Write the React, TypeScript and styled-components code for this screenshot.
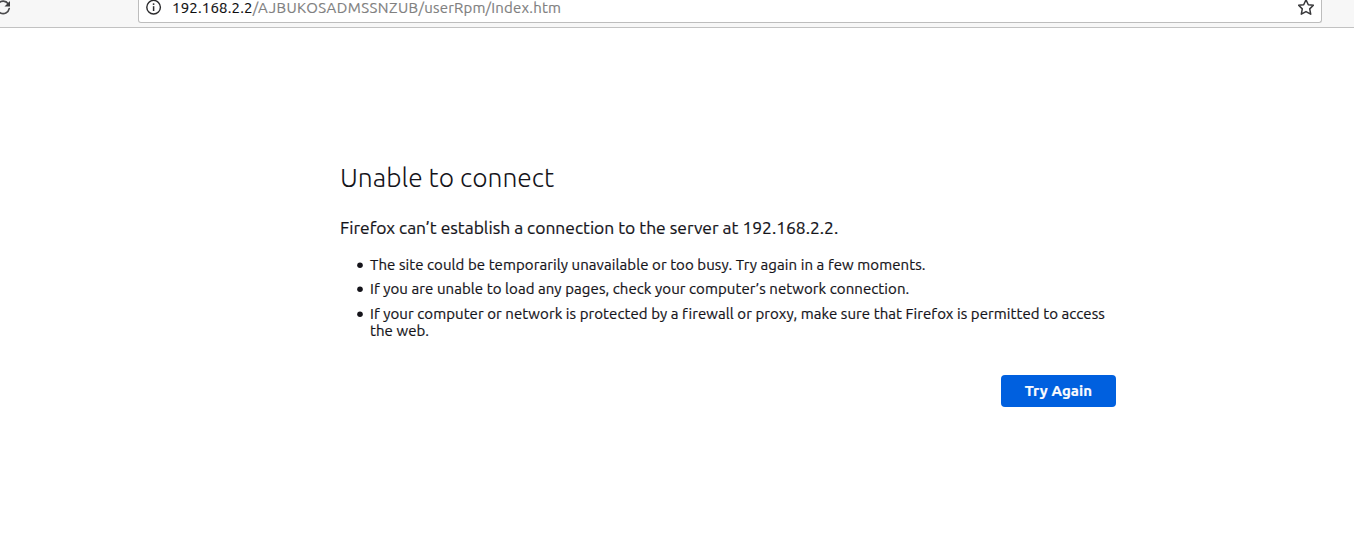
import React from 'react';
import styled, { createGlobalStyle } from 'styled-components';

const GlobalStyle = createGlobalStyle`
  * { box-sizing: border-box; }
  body {
    margin: 0;
    background: #fff;
    color: #15141a;
    font-family: Ubuntu, "Noto Sans", "Open Sans", sans-serif;
    overflow: hidden;
  }
`;

const Page = styled.div`
  height: 538px;
  display: flex;
  flex-direction: column;
  overflow: hidden;
`;

const Toolbar = styled.header`
  flex: none;
  height: 28px;
  display: flex;
  align-items: flex-start;
  background: #f7f7f7;
  border-bottom: 1px solid #c2c2c2;
`;

const ReloadIcon = styled.svg`
  flex: none;
  width: 16px;
  height: 16px;
  margin-left: -5px;
`;

const AddressBar = styled.div`
  width: 1184px;
  height: 23px;
  margin-left: 127px;
  padding: 0 7px;
  display: flex;
  align-items: flex-start;
  background: #fff;
  border: 1px solid #bdbdbd;
  border-top: 0;
  border-radius: 0 0 3px 3px;
`;

const BarIcon = styled.svg`
  flex: none;
  width: 16px;
  height: 16px;
`;

const Address = styled.div`
  flex: 1;
  margin-left: 10px;
  font-size: 15px;
  line-height: 16px;
  letter-spacing: 0.18px;
  white-space: nowrap;
  color: #808080;
  -webkit-text-stroke: 0.15px;
`;

const Host = styled.span`
  color: #0c0c0d;
`;

const Session = styled.span`
  letter-spacing: 0.43px;
`;

const Main = styled.main`
  width: 776px;
  margin: 131px 0 0 340px;
  display: flex;
  flex-direction: column;
`;

const Title = styled.h1`
  margin: 0;
  font-size: 26.4px;
  line-height: 36px;
  font-weight: 300;
  white-space: nowrap;
`;

const Lead = styled.p`
  margin: 21px 0 0;
  font-size: 17.44px;
  line-height: 24px;
  white-space: nowrap;
  -webkit-text-stroke: 0.2px;
`;

const Hints = styled.ul`
  margin: 16px 0 0;
  padding: 0 0 0 30px;
  list-style: none;
`;

const Hint = styled.li`
  position: relative;
  margin-bottom: 8px;
  font-size: 15px;
  line-height: 17px;
  white-space: nowrap;
  letter-spacing: 0.078px;
  -webkit-text-stroke: 0.2px;

  &:first-child {
    margin-bottom: 7px;
  }

  &::before {
    content: '';
    position: absolute;
    left: -13px;
    top: 6px;
    width: 6px;
    height: 6px;
    border-radius: 50%;
    background: #15141a;
    transform: translateY(0.3px) scale(0.93);
  }
`;

const RetryButton = styled.button`
  align-self: flex-end;
  width: 115px;
  height: 32px;
  margin-top: 27.5px;
  padding: 0;
  border: 0;
  border-radius: 4px;
  background: #0060df;
  color: #fbfbfe;
  font: 600 15px/32px Ubuntu, "Noto Sans", "Open Sans", sans-serif;
  letter-spacing: 0.1px;
  -webkit-text-stroke: 0.2px;
`;

export default function App() {
  return (
    <Page>
      <GlobalStyle />
      <Toolbar>
        <ReloadIcon viewBox="0 0 16 16" fill="none">
          <path d="M13.2 3.8A6.2 6.2 0 1 0 14.2 8.6" stroke="#4a4a4c" strokeWidth="1.7" strokeLinecap="round" />
          <path d="M15 1v5.5H9.5z" fill="#3c3c3e" />
        </ReloadIcon>
        <AddressBar>
          <BarIcon viewBox="0 0 16 16" fill="none">
            <circle cx="7.6" cy="7.2" r="6.8" stroke="#2c2c2e" strokeWidth="1.4" />
            <path d="M7.6 6.2v4.8" stroke="#2c2c2e" strokeWidth="1.5" />
            <circle cx="7.6" cy="4.1" r="0.95" fill="#2c2c2e" />
          </BarIcon>
          <Address>
            <Host>192.168.2.2</Host>
            <Session>/AJBUKOSADMSSNZUB</Session>/userRpm/Index.htm
          </Address>
          <BarIcon viewBox="0 0 16 16" fill="none">
            <path
              d="M8 -.2l2.3 4.9 5.1.6-3.7 3.6 1 5.3L8 11.6l-4.7 2.6 1-5.3L.6 5.3l5.1-.6z"
              stroke="#38383a"
              strokeWidth="1.5"
              strokeLinejoin="round"
            />
          </BarIcon>
        </AddressBar>
      </Toolbar>
      <Main>
        <Title>Unable to connect</Title>
        <Lead>Firefox can’t establish a connection to the server at 192.168.2.2.</Lead>
        <Hints>
          <Hint>The site could be temporarily unavailable or too busy. Try again in a few moments.</Hint>
          <Hint>If you are unable to load any pages, check your computer’s network connection.</Hint>
          <Hint>
            If your computer or network is protected by a firewall or proxy, make sure that Firefox is permitted to access
            <br />
            the web.
          </Hint>
        </Hints>
        <RetryButton>Try Again</RetryButton>
      </Main>
    </Page>
  );
}
